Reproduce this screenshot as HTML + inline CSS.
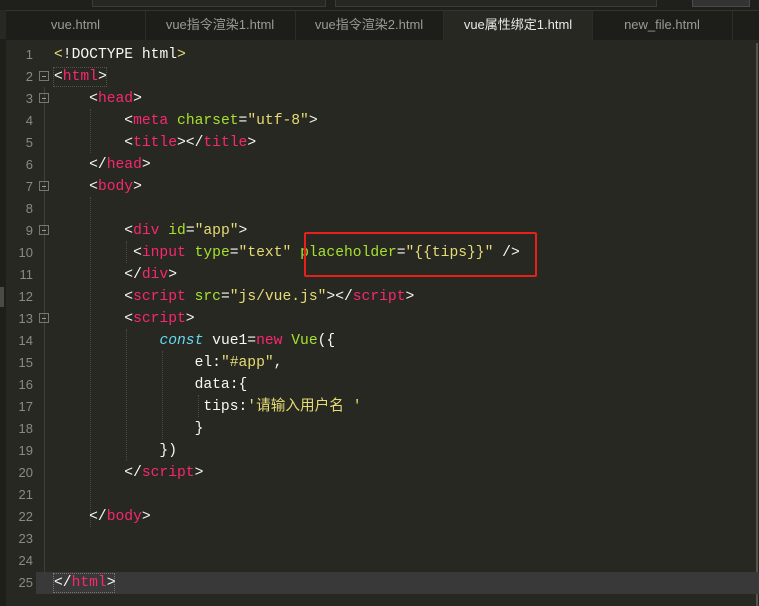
<!DOCTYPE html>
<html><head><meta charset="utf-8"><style>
body{margin:0;width:759px;height:606px;background:#272822;overflow:hidden;position:relative;font-family:"Liberation Mono","Noto Sans CJK SC",monospace;}
.top{position:absolute;left:0;top:0;width:759px;height:10px;background:#1f201c;}
.top .b1{position:absolute;left:92px;top:-2px;width:232px;height:7px;border:1px solid #3a3a36;background:#262722}
.top .b2{position:absolute;left:335px;top:-2px;width:320px;height:7px;border:1px solid #3a3a36;background:#262722}
.top .b3{position:absolute;left:692px;top:-2px;width:56px;height:7px;border:1px solid #4a4a46;background:#333}
.tabs{position:absolute;left:6px;top:10px;width:753px;height:29px;background:#1d1e1a;border-top:1px solid #333;}
.tab{position:absolute;top:0;height:29px;font:13px "Liberation Sans","Noto Sans CJK SC",sans-serif;line-height:28px;color:#9a9a96;text-align:center;border-right:1px solid #2c2d29;}
.tab.act{background:#272822;color:#e8e8e8;}
.gut{position:absolute;left:0;top:39px;width:6px;height:567px;background:#1e1f1b}
.ln{position:absolute;left:0;width:33px;text-align:right;font-size:13px;line-height:22px;color:#8a8a84;font-family:"Liberation Sans",sans-serif;}
.code{position:absolute;left:54px;font-size:14.65px;line-height:22px;height:22px;color:#f8f8f2;white-space:pre;}
.t{color:#f92672}.a{color:#a6e22e}.s{color:#e6db74}.k{color:#66d9ef;font-style:italic}
.fold{position:absolute;left:39px;width:8px;height:8px;border:1px solid #77776f;}
.fold:after{content:"";position:absolute;left:2px;top:3.5px;width:4px;height:1px;background:#99998f}
.vl{position:absolute;width:0;border-left:1px dotted #4a4a44}
.fl{position:absolute;left:44px;width:1px;background:#3f3f3a}
</style></head><body>
<div class="top"><div class="b1"></div><div class="b2"></div><div class="b3"></div></div>
<div class="tabs">
<div class="tab" style="left:0;width:139px">vue.html</div>
<div class="tab" style="left:139px;width:150px">vue指令渲染1.html</div>
<div class="tab" style="left:289px;width:148px">vue指令渲染2.html</div>
<div class="tab act" style="left:438px;width:148px">vue属性绑定1.html</div>
<div class="tab" style="left:586px;width:140px">new_file.html</div>
</div>
<div class="gut"></div>
<div style="position:absolute;left:0;top:287px;width:4px;height:20px;background:#4a4a46"></div>
<div style="position:absolute;left:756px;top:43px;width:2px;height:563px;background:#55554f"></div>
<div style="position:absolute;left:36px;top:572px;width:723px;height:22px;background:#393939"></div>
<div style="position:absolute;left:53px;top:573px;width:62px;height:20px;border:1px dotted #77776f;box-sizing:border-box"></div>
<div style="position:absolute;left:53px;top:67px;width:54px;height:20px;border:1px dotted #55554f;box-sizing:border-box"></div>

<div class="fl" style="top:87px;height:488px"></div>
<div class="vl" style="left:90px;top:109px;height:44px"></div>
<div class="vl" style="left:90px;top:197px;height:330px"></div>
<div class="vl" style="left:126px;top:241px;height:22px"></div>
<div class="vl" style="left:126px;top:329px;height:132px"></div>
<div class="vl" style="left:162px;top:351px;height:88px"></div>
<div class="vl" style="left:198px;top:395px;height:22px"></div>

<div class="fold" style="top:71px"></div>
<div class="fold" style="top:93px"></div>
<div class="fold" style="top:181px"></div>
<div class="fold" style="top:225px"></div>
<div class="fold" style="top:313px"></div>

<div class="ln" style="top:44px">1</div><div class="ln" style="top:66px">2</div><div class="ln" style="top:88px">3</div><div class="ln" style="top:110px">4</div><div class="ln" style="top:132px">5</div><div class="ln" style="top:154px">6</div><div class="ln" style="top:176px">7</div><div class="ln" style="top:198px">8</div><div class="ln" style="top:220px">9</div><div class="ln" style="top:242px">10</div><div class="ln" style="top:264px">11</div><div class="ln" style="top:286px">12</div><div class="ln" style="top:308px">13</div><div class="ln" style="top:330px">14</div><div class="ln" style="top:352px">15</div><div class="ln" style="top:374px">16</div><div class="ln" style="top:396px">17</div><div class="ln" style="top:418px">18</div><div class="ln" style="top:440px">19</div><div class="ln" style="top:462px">20</div><div class="ln" style="top:484px">21</div><div class="ln" style="top:506px">22</div><div class="ln" style="top:528px">23</div><div class="ln" style="top:550px">24</div><div class="ln" style="top:572px">25</div>

<div class="code" style="top:44px"><span class="s">&lt;</span>!DOCTYPE html<span class="s">&gt;</span></div>
<div class="code" style="top:66px">&lt;<span class="t">html</span>&gt;</div>
<div class="code" style="top:88px">    &lt;<span class="t">head</span>&gt;</div>
<div class="code" style="top:110px">        &lt;<span class="t">meta</span> <span class="a">charset</span>=<span class="s">"utf-8"</span>&gt;</div>
<div class="code" style="top:132px">        &lt;<span class="t">title</span>&gt;&lt;/<span class="t">title</span>&gt;</div>
<div class="code" style="top:154px">    &lt;/<span class="t">head</span>&gt;</div>
<div class="code" style="top:176px">    &lt;<span class="t">body</span>&gt;</div>
<div class="code" style="top:220px">        &lt;<span class="t">div</span> <span class="a">id</span>=<span class="s">"app"</span>&gt;</div>
<div class="code" style="top:242px">         &lt;<span class="t">input</span> <span class="a">type</span>=<span class="s">"text"</span> <span class="a">placeholder</span>=<span class="s">"{{tips}}"</span> /&gt;</div>
<div class="code" style="top:264px">        &lt;/<span class="t">div</span>&gt;</div>
<div class="code" style="top:286px">        &lt;<span class="t">script</span> <span class="a">src</span>=<span class="s">"js/vue.js"</span>&gt;&lt;/<span class="t">script</span>&gt;</div>
<div class="code" style="top:308px">        &lt;<span class="t">script</span>&gt;</div>
<div class="code" style="top:330px">            <span class="k">const</span> vue1=<span class="t">new</span> <span class="a">Vue</span>({</div>
<div class="code" style="top:352px">                el:<span class="s">"#app"</span>,</div>
<div class="code" style="top:374px">                data:{</div>
<div class="code" style="top:396px">                 tips:<span class="s">'请输入用户名 '</span></div>
<div class="code" style="top:418px">                }</div>
<div class="code" style="top:440px">            })</div>
<div class="code" style="top:462px">        &lt;/<span class="t">script</span>&gt;</div>
<div class="code" style="top:506px">    &lt;/<span class="t">body</span>&gt;</div>
<div class="code" style="top:572px">&lt;/<span class="t">html</span>&gt;</div>

<div style="position:absolute;left:304px;top:232px;width:233px;height:45px;border:2px solid #e8201c;box-sizing:border-box;border-radius:2px"></div>
</body></html>
